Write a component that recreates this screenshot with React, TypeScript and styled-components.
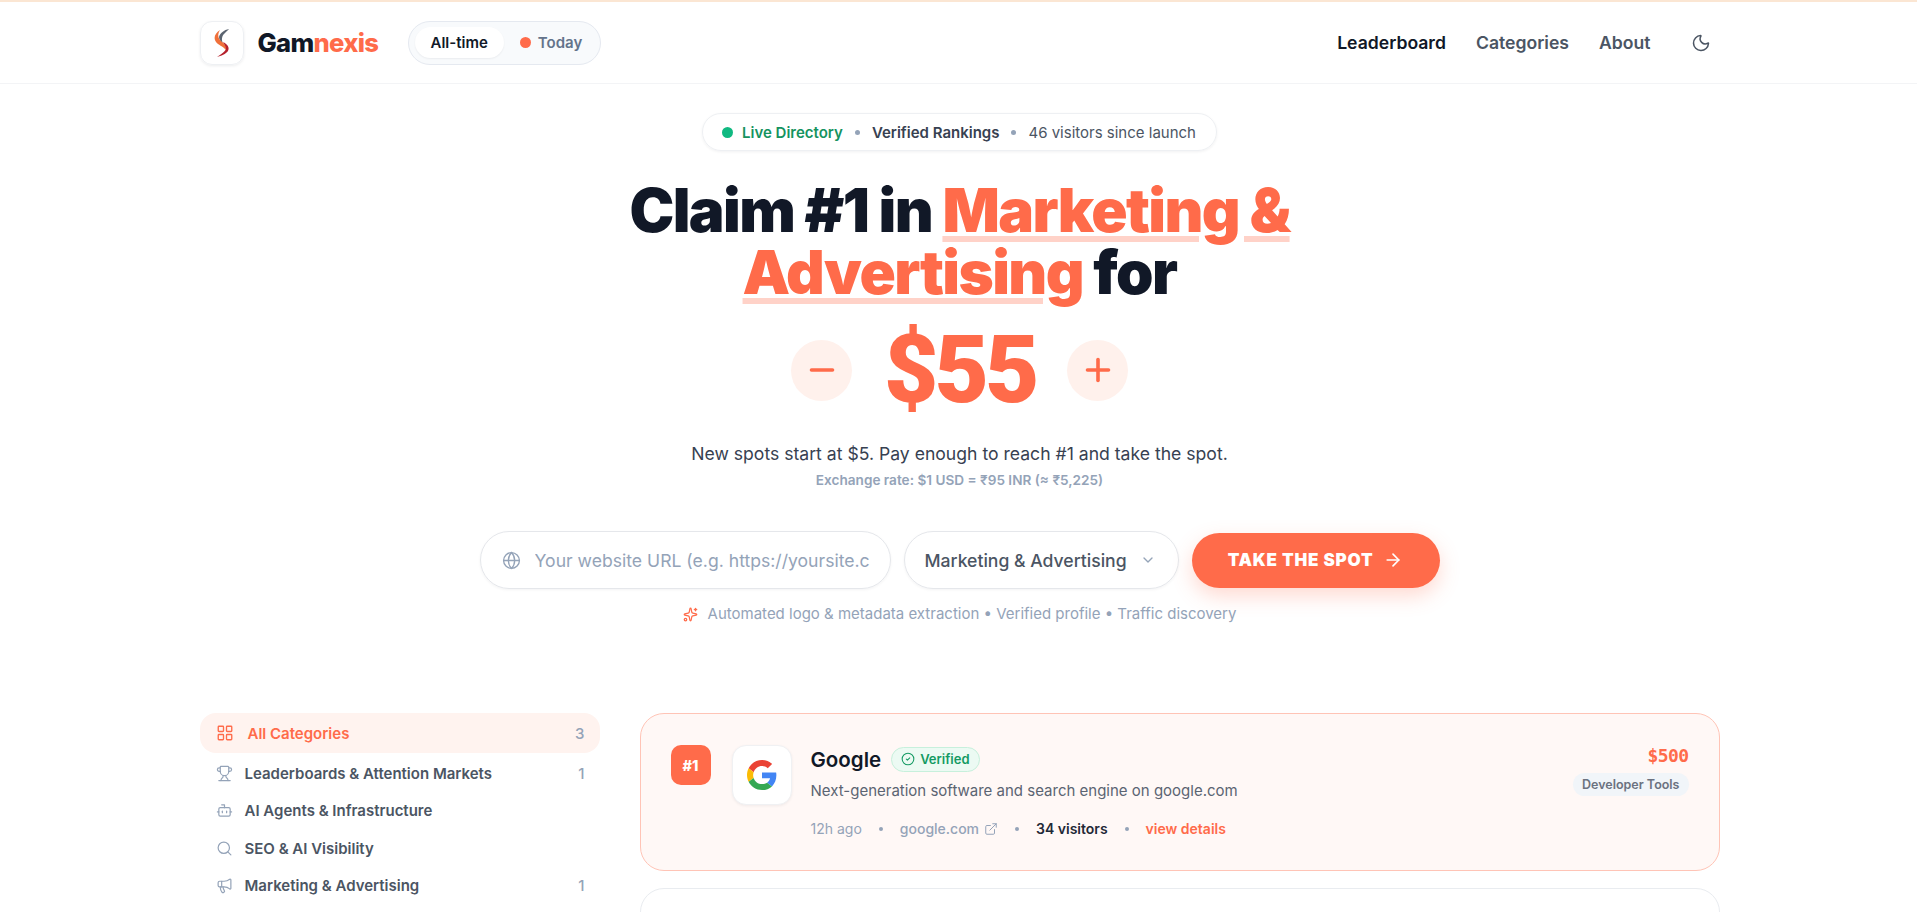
import { createGlobalStyle, styled } from "styled-components";
import {
  ArrowRight,
  Bot,
  ChevronDown,
  CircleCheck,
  ExternalLink,
  Globe,
  LayoutGrid,
  Megaphone,
  Minus,
  Moon,
  Plus,
  Search,
  Sparkles,
  Trophy,
} from "lucide-react";

const accent = "#ff6b4a";
const ink = "#111827";
const slate = "#4b5563";
const muted = "#94a3b8";

const GlobalStyle = createGlobalStyle`
  html, body {
    margin: 0;
    padding: 0;
    background: #ffffff;
    font-family: Inter, "Liberation Sans", sans-serif;
    color: ${ink};
  }
  * { box-sizing: border-box; }
`;

const Page = styled.div`
  height: 100vh;
  overflow: hidden;
  background: #fff;
  border-top: 2px solid #fbe6d3;
`;

const Header = styled.header`
  height: 82px;
  border-bottom: 1px solid #f3f4f6;
`;

const HeaderInner = styled.div`
  width: 1520px;
  height: 100%;
  margin: 0 auto;
  display: flex;
  align-items: center;
  justify-content: space-between;
`;

const HeaderLeft = styled.div`
  display: flex;
  align-items: center;
`;

const LogoBox = styled.div`
  width: 44px;
  height: 44px;
  margin-left: 1px;
  border-radius: 12px;
  border: 1px solid #eef0f3;
  box-shadow: 0 1px 3px rgba(15, 23, 42, 0.08);
  display: flex;
  align-items: center;
  justify-content: center;
  margin-right: 14px;
`;

const Brand = styled.div`
  font-size: 25.6px;
  font-weight: 800;
  letter-spacing: -0.7px;
  color: ${ink};
  width: 119px;
  margin-right: 31px;
  span { color: ${accent}; }
`;

const RangeSwitch = styled.div`
  display: flex;
  align-items: center;
  height: 44px;
  padding: 0 6px;
  width: 193px;
  border-radius: 22px;
  border: 1px solid #e5e9f0;
  background: #f8fafc;
`;

const RangeOption = styled.div<{ $active?: boolean }>`
  display: flex;
  align-items: center;
  gap: 7px;
  height: 31px;
  padding: 0 16px;
  border-radius: 16px;
  font-size: 15px;
  font-weight: 600;
  white-space: nowrap;
  color: ${(p) => (p.$active ? ink : "#64748b")};
  background: ${(p) => (p.$active ? "#fff" : "transparent")};
  box-shadow: ${(p) => (p.$active ? "0 1px 2px rgba(15,23,42,.06)" : "none")};
`;

const Dot = styled.span<{ $color: string; $size: number }>`
  width: ${(p) => p.$size}px;
  height: ${(p) => p.$size}px;
  border-radius: 50%;
  background: ${(p) => p.$color};
  flex: none;
`;

const Nav = styled.nav`
  display: flex;
  align-items: center;
  gap: 30px;
  padding-right: 8px;
`;

const NavLink = styled.a<{ $active?: boolean }>`
  font-size: 17.6px;
  font-weight: 600;
  color: ${(p) => (p.$active ? ink : slate)};
`;

const ThemeButton = styled.div`
  display: flex;
  margin-left: 10px;
  color: ${slate};
`;

const Hero = styled.section`
  display: flex;
  flex-direction: column;
  align-items: center;
  padding: 29px 0 0 2px;
`;

const StatusPill = styled.div`
  display: flex;
  align-items: center;
  height: 38px;
  padding: 0 20px 0 19px;
  border-radius: 19px;
  border: 1px solid #eef0f3;
  box-shadow: 0 1px 3px rgba(15, 23, 42, 0.06);
  font-size: 15px;
`;

const LiveDot = styled(Dot)`
  margin-right: 9px;
`;

const StatusText = styled.span<{ $color: string; $weight: number }>`
  color: ${(p) => p.$color};
  font-weight: ${(p) => p.$weight};
`;

const StatusSep = styled.span`
  width: 5px;
  height: 5px;
  border-radius: 50%;
  background: ${muted};
  margin: 0 12px;
`;

const Title = styled.h1`
  margin: 28px 0 0;
  width: 900px;
  text-align: center;
  font-size: 60px;
  line-height: 62px;
  font-weight: 900;
  letter-spacing: -1.6px;
  color: ${ink};
`;

const Highlight = styled.span`
  color: ${accent};
  text-decoration: underline;
  text-decoration-color: rgba(255, 107, 74, 0.3);
  text-decoration-thickness: 6px;
  text-underline-offset: 4px;
`;

const PriceRow = styled.div`
  display: flex;
  align-items: center;
  justify-content: center;
  height: 112px;
  margin-top: 11px;
  gap: 32px;
`;

const StepButton = styled.div`
  width: 61px;
  height: 61px;
  border-radius: 50%;
  background: #fff1ec;
  color: ${accent};
  display: flex;
  align-items: center;
  justify-content: center;
`;

const Price = styled.div`
  font-family: Roboto, "Liberation Sans", sans-serif;
  font-size: 94px;
  font-weight: 900;
  letter-spacing: -4px;
  color: ${accent};
  line-height: 112px;
  width: 151px;
  text-align: center;
`;

const Lead = styled.p`
  margin: 14px 0 0;
  font-size: 17.6px;
  line-height: 28px;
  color: #374151;
`;

const Rate = styled.p`
  margin: 3px 0 0;
  font-size: 13.6px;
  line-height: 18px;
  font-weight: 600;
  color: ${muted};
`;

const SpotForm = styled.form`
  display: flex;
  align-items: center;
  gap: 13px;
  margin-top: 42px;
`;

const UrlField = styled.div`
  width: 411px;
  height: 58px;
  display: flex;
  align-items: center;
  gap: 14px;
  padding: 0 20px 0 21px;
  border-radius: 29px;
  border: 1px solid #e5e7eb;
  box-shadow: 0 1px 3px rgba(15, 23, 42, 0.05);
  color: ${muted};
`;

const UrlInput = styled.input`
  flex: 1;
  min-width: 0;
  border: 0;
  outline: 0;
  padding: 0;
  background: transparent;
  font: 400 17.6px Inter, "Liberation Sans", sans-serif;
  &::placeholder { color: ${muted}; opacity: 1; }
`;

const CategorySelect = styled.div`
  width: 275px;
  height: 58px;
  display: flex;
  align-items: center;
  justify-content: space-between;
  padding: 0 22px 0 20px;
  border-radius: 29px;
  border: 1px solid #e5e7eb;
  box-shadow: 0 1px 3px rgba(15, 23, 42, 0.05);
  font-size: 17.6px;
  font-weight: 500;
  color: ${slate};
`;

const SubmitButton = styled.button`
  width: 248px;
  height: 55px;
  border: 0;
  border-radius: 28px;
  background: ${accent};
  color: #fff;
  display: flex;
  align-items: center;
  justify-content: center;
  gap: 10px;
  font: 900 17px Inter, "Liberation Sans", sans-serif;
  letter-spacing: 0.8px;
  box-shadow: 0 8px 20px rgba(255, 107, 74, 0.25);
`;

const FormNote = styled.div`
  display: flex;
  align-items: center;
  gap: 10px;
  margin-top: 14px;
  font-size: 15px;
  line-height: 22px;
  color: ${muted};
  svg { color: ${accent}; }
`;

const Directory = styled.main`
  width: 1522px;
  padding-left: 2px;
  margin: 88px auto 0;
  display: grid;
  grid-template-columns: 400px 1080px;
  gap: 40px;
`;

const Sidebar = styled.aside`
  display: flex;
  flex-direction: column;
`;

const CategoryRow = styled.div<{ $active?: boolean }>`
  display: flex;
  align-items: center;
  height: ${(p) => (p.$active ? 40 : 37.3)}px;
  margin-bottom: ${(p) => (p.$active ? 2 : 0)}px;
  padding: 0 15px 0 16px;
  border-radius: 16px;
  gap: ${(p) => (p.$active ? 14 : 12)}px;
  font-size: 15px;
  font-weight: 600;
  color: ${(p) => (p.$active ? accent : slate)};
  background: ${(p) => (p.$active ? "#fff3ef" : "transparent")};
  svg { color: ${(p) => (p.$active ? accent : muted)}; flex: none; }
`;

const CategoryName = styled.span`
  flex: 1;
`;

const CategoryCount = styled.span`
  color: ${muted};
  font-weight: 500;
`;

const Listings = styled.div`
  display: flex;
  flex-direction: column;
  gap: 17px;
`;

const ListingCard = styled.article<{ $top?: boolean }>`
  min-height: 158px;
  display: flex;
  padding: 31px 30px 0;
  border-radius: 24px;
  border: 1px solid ${(p) => (p.$top ? "#ffc4b6" : "#e9ecf0")};
  background: ${(p) => (p.$top ? "#fff8f6" : "#fff")};
`;

const RankBadge = styled.div`
  width: 40px;
  height: 40px;
  border-radius: 10px;
  background: ${accent};
  color: #fff;
  font-size: 14.5px;
  font-weight: 800;
  display: flex;
  align-items: center;
  justify-content: center;
  margin-right: 21px;
`;

const SiteLogo = styled.div`
  width: 60px;
  height: 60px;
  border-radius: 14px;
  background: #fff;
  border: 1px solid #f0f1f3;
  box-shadow: 0 1px 3px rgba(15, 23, 42, 0.06);
  display: flex;
  align-items: center;
  justify-content: center;
  margin-right: 19px;
`;

const ListingBody = styled.div`
  flex: 1;
`;

const NameRow = styled.div`
  display: flex;
  align-items: center;
  gap: 10px;
  height: 28px;
`;

const SiteName = styled.h3`
  margin: 0;
  font-size: 20.5px;
  font-weight: 600;
  color: ${ink};
`;

const VerifiedTag = styled.span`
  display: flex;
  align-items: center;
  gap: 5px;
  height: 25px;
  padding: 0 9px;
  border-radius: 13px;
  border: 1px solid #c7f0dc;
  background: #ecfaf3;
  color: #149a63;
  font-size: 13px;
  font-weight: 600;
`;

const Tagline = styled.p`
  margin: 7px 0 0;
  font-size: 15px;
  line-height: 22px;
  color: #5b6472;
`;

const MetaRow = styled.div`
  display: flex;
  align-items: center;
  margin-top: 17px;
  font-size: 14px;
  line-height: 20px;
  color: ${muted};
`;

const MetaSep = styled.span`
  width: 4px;
  height: 4px;
  border-radius: 50%;
  background: ${muted};
  margin: 0 17px;
`;

const MetaLink = styled.span`
  display: flex;
  align-items: center;
  gap: 5px;
  font-weight: 500;
`;

const Visitors = styled.span`
  color: #1f2937;
  font-weight: 600;
`;

const Details = styled.span`
  color: ${accent};
  font-weight: 600;
`;

const ListingSide = styled.div`
  display: flex;
  flex-direction: column;
  align-items: flex-end;
  gap: 4px;
  margin-top: -2px;
`;

const Bid = styled.div`
  font-family: "DejaVu Sans Mono", "Liberation Mono", monospace;
  font-size: 18px;
  line-height: 26px;
  font-weight: 700;
  letter-spacing: -0.6px;
  color: ${accent};
`;

const CategoryTag = styled.span`
  height: 23px;
  padding: 0 9px;
  border-radius: 12px;
  background: #f1f5f9;
  color: #6b7280;
  font-size: 12.5px;
  line-height: 23px;
  font-weight: 600;
`;

const categories = [
  { name: "Leaderboards & Attention Markets", icon: Trophy, count: 1 },
  { name: "AI Agents & Infrastructure", icon: Bot },
  { name: "SEO & AI Visibility", icon: Search },
  { name: "Marketing & Advertising", icon: Megaphone, count: 1 },
];

function LogoMark() {
  return (
    <svg width="16" height="28" viewBox="0 0 16 28" fill="none">
      <path d="M15 0C10 1 6 4 5 8c0 3 2 5 4 6-2-3-1-8 2-10 1-1 3-3 4-4z" fill="#5b6470" />
      <path d="M6 1C1 4-1 9 2 13c2 3 7 4 10 8 1-3-1-6-4-8C4 10 3 6 6 1z" fill="#f0703a" />
      <path d="M9 13c4 2 7 5 5 9-2 3-7 5-11 6 4-3 8-5 9-8 0-3-2-5-3-7z" fill="#b5202c" />
    </svg>
  );
}

function GoogleMark() {
  return (
    <svg width="30" height="30" viewBox="0 0 48 48">
      <path fill="#EA4335" d="M24 9.500c3.500 0 6.700 1.200 9.200 3.600l6.900-6.900C35.900 2.400 30.500 0 24 0 14.600 0 6.500 5.400 2.600 13.200l8 6.200C12.500 13.600 17.800 9.500 24 9.500z" />
      <path fill="#4285F4" d="M47 24.500c0-1.600-.1-3.100-.4-4.500H24v9h12.900c-.6 3-2.200 5.500-4.700 7.200l7.700 6C44.400 37.900 47 31.800 47 24.500z" />
      <path fill="#FBBC05" d="M10.600 28.600c-.5-1.400-.8-3-.8-4.600s.3-3.200.8-4.600l-8-6.200C.9 16.500 0 20.100 0 24s.9 7.500 2.600 10.800l8-6.200z" />
      <path fill="#34A853" d="M24 48c6.500 0 11.900-2.100 15.900-5.800l-7.700-6c-2.200 1.400-4.900 2.300-8.200 2.300-6.200 0-11.500-4.200-13.400-9.900l-8 6.200C6.500 42.600 14.600 48 24 48z" />
    </svg>
  );
}

export default function App() {
  return (
    <Page>
      <GlobalStyle />
      <Header>
        <HeaderInner>
          <HeaderLeft>
            <LogoBox>
              <LogoMark />
            </LogoBox>
            <Brand>
              Gam<span>nexis</span>
            </Brand>
            <RangeSwitch>
              <RangeOption $active>All-time</RangeOption>
              <RangeOption>
                <Dot $color={accent} $size={11} />
                Today
              </RangeOption>
            </RangeSwitch>
          </HeaderLeft>
          <Nav>
            <NavLink $active>Leaderboard</NavLink>
            <NavLink>Categories</NavLink>
            <NavLink>About</NavLink>
            <ThemeButton>
              <Moon size={20} strokeWidth={1.8} />
            </ThemeButton>
          </Nav>
        </HeaderInner>
      </Header>

      <Hero>
        <StatusPill>
          <LiveDot $color="#10b981" $size={11} />
          <StatusText $color="#15935f" $weight={600}>
            Live Directory
          </StatusText>
          <StatusSep />
          <StatusText $color="#374151" $weight={600}>
            Verified Rankings
          </StatusText>
          <StatusSep />
          <StatusText $color={slate} $weight={400}>
            46 visitors since launch
          </StatusText>
        </StatusPill>

        <Title>
          Claim #1 in <Highlight>Marketing & Advertising</Highlight> for
        </Title>

        <PriceRow>
          <StepButton>
            <Minus size={36} strokeWidth={2.4} />
          </StepButton>
          <Price>$55</Price>
          <StepButton>
            <Plus size={36} strokeWidth={2.4} />
          </StepButton>
        </PriceRow>

        <Lead>New spots start at $5. Pay enough to reach #1 and take the spot.</Lead>
        <Rate>Exchange rate: $1 USD = ₹95 INR (≈ ₹5,225)</Rate>

        <SpotForm>
          <UrlField>
            <Globe size={19} strokeWidth={1.7} />
            <UrlInput placeholder="Your website URL (e.g. https://yoursite.com)" />
          </UrlField>
          <CategorySelect>
            Marketing & Advertising
            <ChevronDown size={16} color={muted} />
          </CategorySelect>
          <SubmitButton type="button">
            TAKE THE SPOT
            <ArrowRight size={20} strokeWidth={2} />
          </SubmitButton>
        </SpotForm>

        <FormNote>
          <Sparkles size={15} />
          Automated logo & metadata extraction • Verified profile • Traffic discovery
        </FormNote>
      </Hero>

      <Directory>
        <Sidebar>
          <CategoryRow $active>
            <LayoutGrid size={18} strokeWidth={1.8} />
            <CategoryName>All Categories</CategoryName>
            <CategoryCount>3</CategoryCount>
          </CategoryRow>
          {categories.map((c) => (
            <CategoryRow key={c.name}>
              <c.icon size={17} strokeWidth={1.7} />
              <CategoryName>{c.name}</CategoryName>
              <CategoryCount>{c.count}</CategoryCount>
            </CategoryRow>
          ))}
        </Sidebar>

        <Listings>
          <ListingCard $top>
            <RankBadge>#1</RankBadge>
            <SiteLogo>
              <GoogleMark />
            </SiteLogo>
            <ListingBody>
              <NameRow>
                <SiteName>Google</SiteName>
                <VerifiedTag>
                  <CircleCheck size={14} strokeWidth={1.8} />
                  Verified
                </VerifiedTag>
              </NameRow>
              <Tagline>Next-generation software and search engine on google.com</Tagline>
              <MetaRow>
                12h ago
                <MetaSep />
                <MetaLink>
                  google.com
                  <ExternalLink size={14} strokeWidth={1.7} />
                </MetaLink>
                <MetaSep />
                <Visitors>34 visitors</Visitors>
                <MetaSep />
                <Details>view details</Details>
              </MetaRow>
            </ListingBody>
            <ListingSide>
              <Bid>$500</Bid>
              <CategoryTag>Developer Tools</CategoryTag>
            </ListingSide>
          </ListingCard>
          <ListingCard />
        </Listings>
      </Directory>
    </Page>
  );
}
